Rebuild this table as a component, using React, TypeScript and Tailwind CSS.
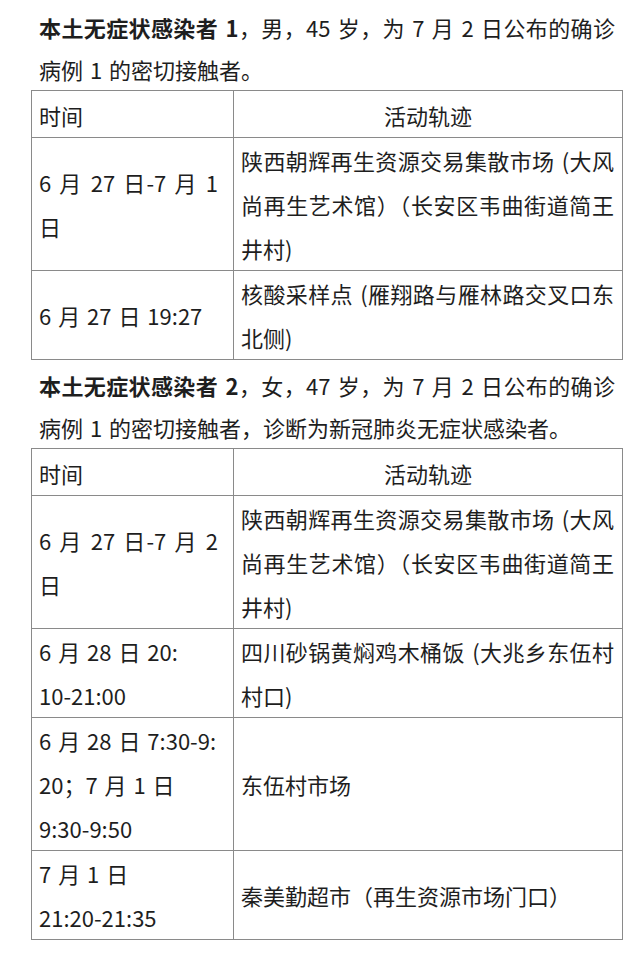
import React from 'react';

type Row = { time: string[]; place: string[]; stretchTime?: boolean };

const TABLE_1: Row[] = [
  {
    time: ['6 月 27 日-7 月 1', '日'],
    stretchTime: true,
    place: ['陕西朝辉再生资源交易集散市场 (大风', '尚再生艺术馆）（长安区韦曲街道简王', '井村)'],
  },
  {
    time: ['6 月 27 日 19:27'],
    place: ['核酸采样点 (雁翔路与雁林路交叉口东', '北侧)'],
  },
];

const TABLE_2: Row[] = [
  {
    time: ['6 月 27 日-7 月 2', '日'],
    stretchTime: true,
    place: ['陕西朝辉再生资源交易集散市场 (大风', '尚再生艺术馆）（长安区韦曲街道简王', '井村)'],
  },
  {
    time: ['6 月 28 日 20:', '10-21:00'],
    place: ['四川砂锅黄焖鸡木桶饭 (大兆乡东伍村', '村口)'],
  },
  {
    time: ['6 月 28 日 7:30-9:', '20；7 月 1 日', '9:30-9:50'],
    place: ['东伍村市场'],
  },
  {
    time: ['7 月 1 日', '21:20-21:35'],
    place: ['秦美勤超市（再生资源市场门口）'],
  },
];

// wrapped lines are justified, the last one is left as is
function Lines({ lines, justify }: { lines: string[]; justify?: boolean }) {
  return (
    <>
      {lines.map((line, i) => (
        <div
          key={i}
          className={justify && i < lines.length - 1 ? 'whitespace-nowrap [text-align-last:justify]' : 'whitespace-nowrap'}
        >
          {line}
        </div>
      ))}
    </>
  );
}

function TrackTable({ rows }: { rows: Row[] }) {
  return (
    <table className="w-full border-collapse table-fixed">
      <colgroup>
        <col className="w-[202px]" />
        <col />
      </colgroup>
      <thead>
        <tr>
          <td className="border border-[#8a8a8a] pl-[7px] h-[47px] align-middle pt-[2px]">时间</td>
          <td className="border border-[#8a8a8a] text-center h-[47px] align-middle pt-[2px]">活动轨迹</td>
        </tr>
      </thead>
      <tbody>
        {rows.map((row, i) => (
          <tr key={i}>
            <td className="border border-[#8a8a8a] pl-[7px] pr-[15px] align-middle leading-[44px]">
              <Lines lines={row.time} justify={row.stretchTime} />
            </td>
            <td className="border border-[#8a8a8a] pl-[7px] pr-[8px] align-middle leading-[44px]">
              <Lines lines={row.place} justify />
            </td>
          </tr>
        ))}
      </tbody>
    </table>
  );
}

export default function App() {
  return (
    <div className="min-h-screen bg-white text-[#1e1e1e] text-[22px] [word-spacing:2px] font-['Noto_Sans_CJK_SC','Noto_Sans',sans-serif]">
      <div className="pl-[31px] pr-[17px]">
        <div className="pt-[6px] px-[8px] leading-[42px]">
          <div className="whitespace-nowrap [text-align-last:justify]">
            <span className="font-bold">本土无症状感染者 1</span>，男，45 岁，为 7 月 2 日公布的确诊
          </div>
          <div>病例 1 的密切接触者。</div>
        </div>
        <TrackTable rows={TABLE_1} />

        <div className="pt-[4px] px-[8px] leading-[42px]">
          <div className="whitespace-nowrap [text-align-last:justify]">
            <span className="font-bold">本土无症状感染者 2</span>，女，47 岁，为 7 月 2 日公布的确诊
          </div>
          <div>病例 1 的密切接触者，诊断为新冠肺炎无症状感染者。</div>
        </div>
        <TrackTable rows={TABLE_2} />
      </div>
    </div>
  );
}
